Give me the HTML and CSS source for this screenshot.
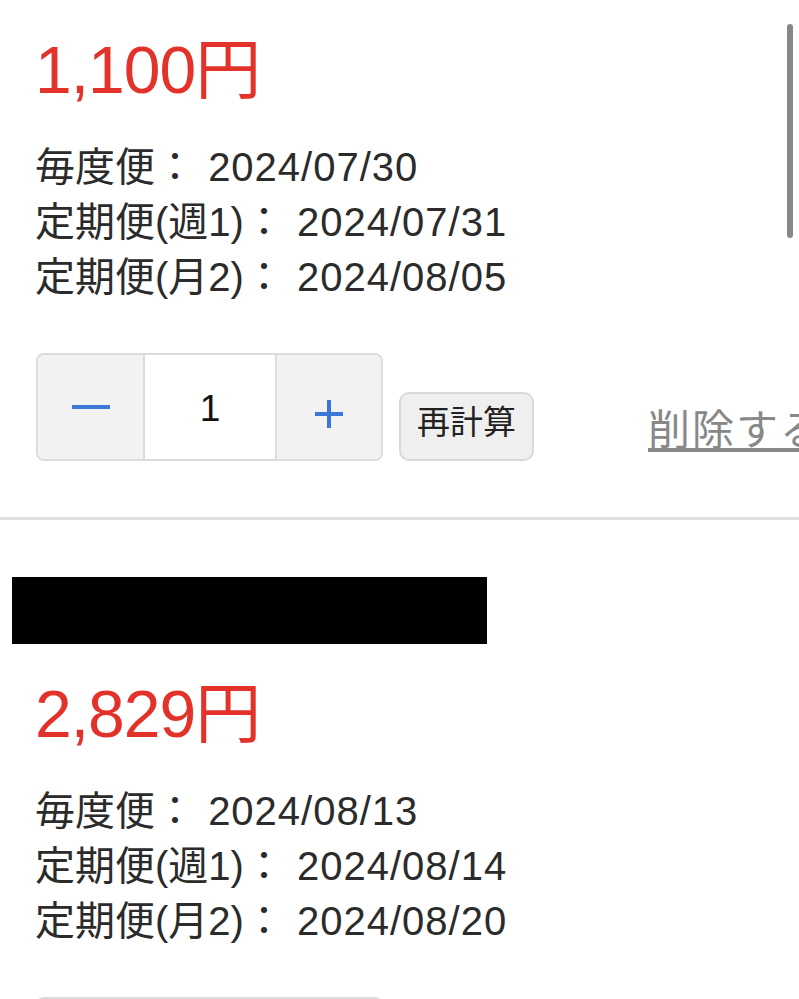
FILE: index.html
```html
<!DOCTYPE html>
<html lang="ja">
<head>
<meta charset="utf-8">
<title>カート</title>
<link rel="stylesheet" href="styles.css">
</head>
<body>
<main class="cart">
  <section class="item">
    <p class="price">1,100円</p>
    <ul class="dates">
      <li>毎度便： <span class="date">2024/07/30</span></li>
      <li>定期便(週1)： <span class="date">2024/07/31</span></li>
      <li>定期便(月2)： <span class="date">2024/08/05</span></li>
    </ul>
    <div class="actions">
      <div class="stepper">
        <button class="step minus" type="button" aria-label="減らす">
          <svg width="38" height="4" viewBox="0 0 38 4"><rect x="0" y="0" width="38" height="4" fill="#3a77d9"/></svg>
        </button>
        <span class="qty">1</span>
        <button class="step plus" type="button" aria-label="増やす">
          <svg width="28" height="28" viewBox="0 0 28 28"><rect x="0" y="12" width="28" height="4" fill="#3a77d9"/><rect x="12" y="0" width="4" height="28" fill="#3a77d9"/></svg>
        </button>
      </div>
      <button class="recalc" type="button">再計算</button>
      <a class="remove" href="#">削除する</a>
    </div>
  </section>
  <section class="item">
    <div class="name"></div>
    <p class="price">2,829円</p>
    <ul class="dates">
      <li>毎度便： <span class="date">2024/08/13</span></li>
      <li>定期便(週1)： <span class="date">2024/08/14</span></li>
      <li>定期便(月2)： <span class="date">2024/08/20</span></li>
    </ul>
    <div class="actions">
      <div class="stepper">
        <button class="step minus" type="button" aria-label="減らす">
          <svg width="38" height="4" viewBox="0 0 38 4"><rect x="0" y="0" width="38" height="4" fill="#3a77d9"/></svg>
        </button>
        <span class="qty">1</span>
        <button class="step plus" type="button" aria-label="増やす">
          <svg width="28" height="28" viewBox="0 0 28 28"><rect x="0" y="12" width="28" height="4" fill="#3a77d9"/><rect x="12" y="0" width="4" height="28" fill="#3a77d9"/></svg>
        </button>
      </div>
      <button class="recalc" type="button">再計算</button>
      <a class="remove" href="#">削除する</a>
    </div>
  </section>
</main>
<div class="scrollbar"></div>
</body>
</html>
```
FILE: styles.css
```css
html, body {
  margin: 0;
  padding: 0;
  overflow: hidden;
  background: #fff;
}
body {
  font-family: "Liberation Sans", "Noto Sans CJK JP", sans-serif;
  color: #2b2b2b;
  width: 799px;
}
.item {
  padding: 0 0 56px 35px;
  border-bottom: 3px solid #e0e0e0;
}
.item + .item {
  padding-top: 57px;
}
.name {
  width: 475px;
  height: 67px;
  background: #000;
  margin-left: -23px;
}
.price {
  margin: 30px 0 0;
  font-size: 66px;
  line-height: 80px;
  letter-spacing: -1px;
  color: #e3322a;
}
.dates {
  list-style: none;
  margin: 30px 0 0;
  padding: 0;
  font-size: 40px;
  line-height: 55px;
}
.date {
  margin-left: 2px;
  letter-spacing: 1px;
}
.actions {
  display: flex;
  align-items: flex-end;
  margin-top: 48px;
  margin-left: 1px;
  white-space: nowrap;
}
.stepper {
  display: flex;
  height: 108px;
  box-sizing: border-box;
  border: 2px solid #dcdcdc;
  border-radius: 8px;
  overflow: hidden;
  flex: none;
}
.step {
  width: 105px;
  border: 0;
  padding: 0;
  margin: 0;
  background: #f2f2f2;
  display: flex;
  align-items: center;
  justify-content: center;
}
.step svg {
  display: block;
}
.plus {
  width: 104px;
  padding-top: 14px;
}
.qty {
  flex: none;
  width: 134px;
  box-sizing: border-box;
  border-left: 2px solid #dcdcdc;
  border-right: 2px solid #dcdcdc;
  background: #fff;
  display: flex;
  align-items: center;
  justify-content: center;
  font-size: 37px;
  color: #111;
  padding-top: 3px;
}
.recalc {
  flex: none;
  margin: 0 0 0 16px;
  width: 135px;
  height: 69px;
  box-sizing: border-box;
  border: 2px solid #d9d9d9;
  border-radius: 10px;
  background: #efefef;
  font-family: "Noto Sans CJK JP", sans-serif;
  font-size: 33px;
  line-height: 1;
  color: #222;
  padding: 0 0 12px;
  display: flex;
  align-items: center;
  justify-content: center;
}
.remove {
  margin: 0 0 4px 114px;
  font-family: "Noto Sans CJK JP", sans-serif;
  font-size: 42px;
  line-height: 60px;
  letter-spacing: 2px;
  color: #888;
  text-decoration: underline;
}
.scrollbar {
  position: fixed;
  top: 24px;
  right: 6px;
  width: 6px;
  height: 214px;
  border-radius: 3px;
  background: #888;
}
```
